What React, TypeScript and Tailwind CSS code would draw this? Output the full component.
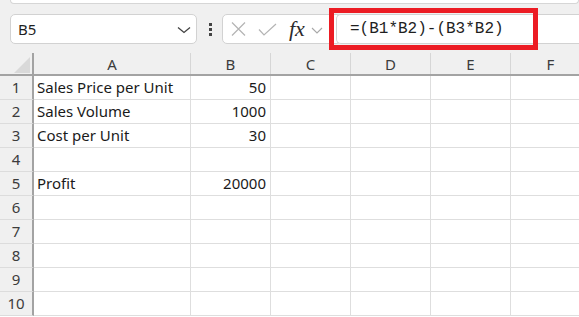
import React from "react";

const COLS = ["A", "B", "C", "D", "E", "F"];
const WIDTHS = ["w-[157px]", "w-[80px]", "w-[80px]", "w-[80px]", "w-[80px]", "w-[80px]"];

const ROWS: [string, string][] = [
  ["Sales Price per Unit", "50"],
  ["Sales Volume", "1000"],
  ["Cost per Unit", "30"],
  ["", ""],
  ["Profit", "20000"],
  ["", ""],
  ["", ""],
  ["", ""],
  ["", ""],
  ["", ""],
];

const font = "font-['Noto_Sans','Liberation_Sans',sans-serif]";

const TopBar = () => (
  <div className="relative h-[53px] bg-[#f0f0f0]">
    <div className="ml-[10px] h-[4px] rounded-b-[5px] border-x border-b border-[#d6d6d6] bg-white" />
    <div className="mt-[10px] flex items-center">
      {/* name box */}
      <div className="ml-[10px] flex h-[30px] w-[187px] items-center justify-between rounded-[5px] border border-[#d2d2d2] bg-white pl-[7px] pr-[5px]">
        <span className={`${font} text-[15px] text-[#1f1f1f]`}>B5</span>
        <svg width="14" height="8" viewBox="0 0 14 8" className="mt-[1px]">
          <polyline points="1,1.5 7,6.5 13,1.5" fill="none" stroke="#424242" strokeWidth="1.3" />
        </svg>
      </div>
      {/* grip */}
      <div className="ml-[12px] flex w-[3px] flex-col gap-[2px]">
        <div className="h-[3px] w-[3px] bg-[#444]" />
        <div className="h-[3px] w-[3px] bg-[#444]" />
        <div className="h-[3px] w-[3px] bg-[#444]" />
      </div>
      {/* formula buttons */}
      <div className="ml-[10px] flex h-[30px] w-[120px] items-center rounded-[5px] border border-[#d2d2d2] bg-white pl-[8px]">
        <svg width="15" height="14" viewBox="0 0 15 14">
          <path d="M1 0.5 L14 13.5 M14 0.5 L1 13.5" stroke="#b4b4b4" strokeWidth="1.2" fill="none" />
        </svg>
        <svg width="19" height="13" viewBox="0 0 19 13" className="ml-[12px]">
          <polyline points="1,6.5 6,12 18,1" stroke="#b4b4b4" strokeWidth="1.2" fill="none" />
        </svg>
        <span className="ml-[12px] font-['Liberation_Serif',serif] text-[22px] italic leading-none text-[#2b2b2b]">
          fx
        </span>
        <svg width="12" height="7" viewBox="0 0 12 7" className="ml-[6px] mt-[2px]">
          <polyline points="1,1 6,6 11,1" fill="none" stroke="#a8a8a8" strokeWidth="1.1" />
        </svg>
      </div>
      {/* formula input */}
      <div className="ml-[-6px] flex h-[30px] flex-1 items-center rounded-l-[5px] border border-r-0 border-[#d2d2d2] bg-white pl-[13px]">
        <span className="font-['Liberation_Mono',monospace] text-[16px] text-[#1f1f1f]">=(B1*B2)-(B3*B2)</span>
      </div>
    </div>
    {/* annotation box */}
    <div className="absolute left-[329px] top-[8px] h-[42px] w-[209px] border-[5px] border-[#ec1c24]" />
  </div>
);

const Grid = () => (
  <div className={`${font} w-[591px] text-[15px] text-[#1a1a1a]`}>
    <div className="flex h-[23px] border-b-2 border-[#a3a3a3] bg-[#f0f0f0]">
      <div className="relative w-[34px] border-r-2 border-[#a3a3a3]">
        <svg width="16" height="16" viewBox="0 0 16 16" className="absolute left-[14px] top-[4px]">
          <polygon points="16,0 16,16 0,16" fill="#d9d9d9" />
        </svg>
      </div>
      {COLS.map((c, i) => (
        <div
          key={c}
          className={`${WIDTHS[i]} flex items-center justify-center border-r border-[#d6d6d6] pt-[2px] text-[#3c3c3c]`}
        >
          {c}
        </div>
      ))}
    </div>
    {ROWS.map((r, idx) => (
      <div key={idx} className="flex h-[24px]">
        <div className="flex w-[34px] items-center justify-center border-r-2 border-b border-r-[#a3a3a3] border-b-[#dcdcdc] bg-[#f0f0f0] text-[#3c3c3c]">
          {idx + 1}
        </div>
        <div className={`${WIDTHS[0]} flex items-center border-r border-b border-[#dedede] pl-[3px]`}>{r[0]}</div>
        <div className={`${WIDTHS[1]} flex items-center justify-end border-r border-b border-[#dedede] pr-[4px]`}>{r[1]}</div>
        {WIDTHS.slice(2).map((w, j) => (
          <div key={j} className={`${w} border-r border-b border-[#dedede]`} />
        ))}
      </div>
    ))}
  </div>
);

export default function App() {
  return (
    <div className="h-[317px] w-[579px] overflow-hidden bg-white">
      <TopBar />
      <Grid />
    </div>
  );
}
